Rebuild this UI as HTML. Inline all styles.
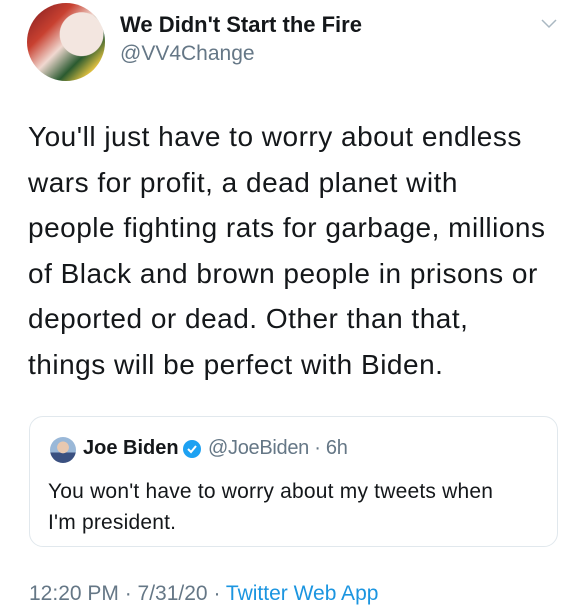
<!DOCTYPE html>
<html><head><style>
body{margin:0;width:586px;height:612px;background:#fff;font-family:"Liberation Sans",sans-serif;position:relative;overflow:hidden;color:#14171a}
.a{position:absolute}
</style></head><body>
<div class="a" style="left:27px;top:3px;width:78px;height:78px;border-radius:50%;overflow:hidden;background:radial-gradient(circle at 70% 40%,#f3e6e0 0 30%,transparent 31%),linear-gradient(135deg,#7a1a20 0%,#c84030 30%,#f0d8d0 50%,#2a5a30 70%,#e0c040 85%,#a03040 100%)"></div>
<div class="a" style="left:120px;top:12px;font-size:22px;font-weight:bold;color:#14171a">We Didn't Start the Fire</div>
<div class="a" style="left:120px;top:42px;font-size:21px;color:#657786">@VV4Change</div>
<svg class="a" style="left:540px;top:18px" width="18" height="12" viewBox="0 0 18 12"><path d="M2 2 L9 9 L16 2" fill="none" stroke="#aab8c2" stroke-width="1.5"/></svg>
<div class="a" style="left:28px;top:114px;width:570px;font-size:28px;line-height:45.5px;letter-spacing:0.5px;color:#14171a">You'll just have to worry about endless<br>wars for profit, a dead planet with<br>people fighting rats for garbage, millions<br>of Black and brown people in prisons or<br>deported or dead. Other than that,<br>things will be perfect with Biden.</div>
<div class="a" style="left:29px;top:416px;width:527px;height:129px;border:1px solid #e1e8ed;border-radius:14px"></div>
<div class="a" style="left:50px;top:437px;width:26px;height:26px;border-radius:50%;background:radial-gradient(circle at 50% 40%,#e8c8b0 0 28%,transparent 30%),linear-gradient(#9ab8d8 0 60%,#3a5080 60%)"></div>
<div class="a" style="left:83px;top:437px;font-size:20px;font-weight:bold">Joe Biden</div>
<svg class="a" style="left:182px;top:439px" width="20" height="20" viewBox="0 0 20 20"><circle cx="10" cy="10" r="9" fill="#1da1f2"/><path d="M6 10 L9 13 L14 7" fill="none" stroke="#fff" stroke-width="2"/></svg>
<div class="a" style="left:208px;top:437px;font-size:20px;color:#657786;letter-spacing:-0.3px">@JoeBiden · 6h</div>
<div class="a" style="left:48px;top:476px;font-size:21px;line-height:31px;letter-spacing:0.2px">You won't have to worry about my tweets when<br>I'm president.</div>
<div class="a" style="left:29px;top:582px;font-size:21px;letter-spacing:0;color:#657786">12:20 PM · 7/31/20 · <span style="color:#1b95e0">Twitter Web App</span></div>
</body></html>
